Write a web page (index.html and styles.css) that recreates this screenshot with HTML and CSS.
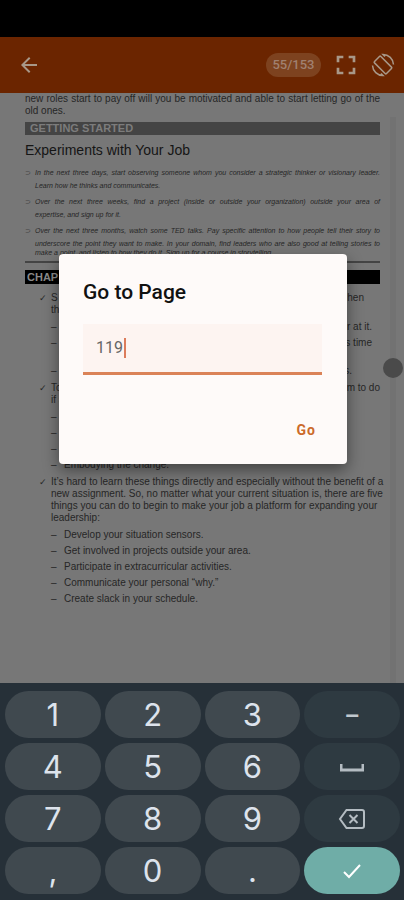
FILE: index.html
```html
<!DOCTYPE html>
<html lang="en">
<head>
<meta charset="utf-8">
<meta name="viewport" content="width=device-width, initial-scale=1">
<title>Go to Page</title>
<link rel="stylesheet" href="styles.css">
</head>
<body>
<div class="status"></div>
<header class="appbar">
  <button class="icon-btn" aria-label="Back">
    <svg width="24" height="24" viewBox="0 0 24 24"><path d="M20 11H7.800l5.600-5.600L12 4l-8 8 8 8 1.400-1.400L7.800 13H20z"/></svg>
  </button>
  <span class="counter">55/153</span>
  <button class="icon-btn" aria-label="Full screen">
    <svg width="32" height="32" viewBox="0 0 24 24"><path d="M7 14H5v5h5v-2H7zM5 10h2V7h3V5H5zM17 17h-3v2h5v-5h-2zM14 5v2h3v3h2V5z"/></svg>
  </button>
  <button class="icon-btn" aria-label="Rotate screen">
    <svg width="24" height="24" viewBox="0 0 24 24"><g class="rotate"><rect x="7.500" y="3.500" width="9" height="17" rx="1" transform="rotate(-45 12 12)" /><path d="M1.500 12.500A10.500 10.500 0 0 0 12 22.500l-2-2M22.500 11.500A10.500 10.500 0 0 0 12 1.500l2 2" /></g></svg>
  </button>
</header>
<main class="viewer">
  <article class="page">
    <p class="body"><span class="full">new roles start to pay off will you be motivated and able to start letting go of the</span><span>old ones.</span></p>
    <h2 class="band">GETTING STARTED</h2>
    <h3 class="heading">Experiments with Your Job</h3>
    <ul class="tips">
      <li><span class="full">In the next three days, start observing someone whom you consider a strategic thinker or visionary leader.</span><span>Learn how he thinks and communicates.</span></li>
      <li><span class="full">Over the next three weeks, find a project (inside or outside your organization) outside your area of</span><span>expertise, and sign up for it.</span></li>
      <li><span class="full">Over the next three months, watch some TED talks. Pay specific attention to how people tell their story to</span><span class="full">underscore the point they want to make. In your domain, find leaders who are also good at telling stories to</span><span class="tight">make a point, and listen to how they do it. Sign up for a course in storytelling.</span></li>
    </ul>
    <hr class="rule">
    <h2 class="band chapter">CHAP</h2>
    <ul class="points">
      <li class="check"><span class="ends"><span>S</span><span class="in2">hen</span></span><span>the</span></li>
      <li class="dash"><span class="ends"><span></span><span class="in1">r at it.</span></span></li>
      <li class="dash two"><span class="ends"><span></span><span class="in1">s time</span></span></li>
      <li class="dash"><span class="ends"><span></span><span class="in3">s.</span></span></li>
      <li class="check"><span class="ends"><span>To</span><span>m to do</span></span><span>if s</span></li>
      <li class="dash"></li>
      <li class="dash"></li>
      <li class="dash"></li>
      <li class="dash">Embodying the change.</li>
      <li class="check"><span>It’s hard to learn these things directly and especially without the benefit of a</span><span>new assignment. So, no matter what your current situation is, there are five</span><span>things you can do to begin to make your job a platform for expanding your</span><span>leadership:</span></li>
      <li class="dash">Develop your situation sensors.</li>
      <li class="dash">Get involved in projects outside your area.</li>
      <li class="dash">Participate in extracurricular activities.</li>
      <li class="dash">Communicate your personal “why.”</li>
      <li class="dash">Create slack in your schedule.</li>
    </ul>
  </article>
  <div class="scroll"><span class="thumb"></span></div>
  <form class="dialog" role="dialog" aria-labelledby="title">
    <h1 class="title" id="title"><label for="page">Go to Page</label></h1>
    <div class="field"><input id="page" type="text" inputmode="numeric" value="119"><span class="caret"></span></div>
    <button class="go" type="button">Go</button>
  </form>
</main>
<section class="keyboard" aria-label="Keyboard">
  <button>1</button><button>2</button><button>3</button><button class="dim">–</button>
  <button>4</button><button>5</button><button>6</button>
  <button class="dim" aria-label="Space"><svg width="24" height="24" viewBox="0 0 24 24"><path class="line thick" d="M1 9v6h22V9"/></svg></button>
  <button>7</button><button>8</button><button>9</button>
  <button class="dim" aria-label="Delete"><svg width="28" height="24" viewBox="0 0 28 24"><path class="line" d="M8.500 3H24a2 2 0 0 1 2 2v14a2 2 0 0 1-2 2H8.500L2 12zM11.500 8l8 8M19.500 8l-8 8"/></svg></button>
  <button>,</button><button>0</button><button>.</button>
  <button class="done" aria-label="Done"><svg width="24" height="24" viewBox="0 0 24 24"><path class="line" d="M4 13l5 5L20 6"/></svg></button>
</section>
</body>
</html>
```
FILE: styles.css
```css
* { box-sizing: border-box; }
body {
  margin: 0;
  min-height: 100vh;
  display: flex;
  flex-direction: column;
  background: #777;
  color: #262626;
  font-family: "Liberation Sans", Arial, sans-serif;
}
button { border: 0; padding: 0; background: none; font: inherit; color: inherit; }
ul, h1, h2, h3, p { margin: 0; padding: 0; font-weight: 400; list-style: none; }
svg { display: block; }

.status { height: 37px; background: #000; }
.appbar {
  height: 56px;
  display: flex;
  align-items: center;
  background: #6b2500;
  color: #a08070;
  padding: 0 9px 0 17px;
}
.appbar svg { fill: #a89888; }
.appbar .rotate { fill: none; stroke: #a89888; stroke-width: 1.5; }
.counter {
  margin: 0 9px 0 auto;
  width: 55px;
  border-radius: 12px;
  background: #7d421f;
  text-align: center;
  font: 500 13px/24px Roboto, sans-serif;
}
.icon-btn + .icon-btn { margin-left: 9px; }

.viewer { position: relative; flex: 1; display: flex; overflow: hidden; }
.page { flex: 1; min-width: 0; padding: 0 10px 0 25px; }
.page span, .page li { white-space: nowrap; }
.page p > span, .page li > span { display: block; }
.page .full { text-align: justify; text-align-last: justify; white-space: normal; }
.body { font-size: 10px; line-height: 12px; }
.band {
  margin-top: 5px;
  padding-left: 5px;
  height: 13px;
  font-size: 11px;
  line-height: 13px;
  font-weight: 700;
  background: #444;
  color: #7c7c7c;
}
.heading { margin-top: 5px; font-size: 14px; line-height: 20px; color: #151515; }
.tips { margin-top: 6px; font-size: 7px; line-height: 13px; font-style: italic; }
.tips li { position: relative; padding-left: 10px; margin-bottom: 3px; }
.tips li::before { content: "⊃"; position: absolute; left: 0; font-style: normal; color: #444; }
.tips .tight { line-height: 6px; }
.rule { border: 0; height: 2px; margin: 5px 0 7px; background: #444; }
.chapter { margin: 0; padding-left: 2px; height: 14px; line-height: 14px; background: #000; color: #8a8a8a; }

.points { padding: 7px 0 0 26px; font-size: 10px; line-height: 12px; display: flex; flex-direction: column; }
.points li { position: relative; margin-bottom: 4px; }
.points .check { margin: 1px 0 5px; }
.check::before { content: "✓"; position: absolute; left: -12px; font-family: "DejaVu Sans", sans-serif; font-size: 9px; }
.dash { min-height: 12px; padding-left: 13px; }
.dash::before { content: "–"; position: absolute; left: 0; }
.points .two { margin-bottom: 16px; }
.points .ends { display: flex; justify-content: space-between; }
.in1 { margin-right: 8px; }
.in2 { margin-right: 16px; }
.in3 { margin-right: 28px; }

.scroll {
  width: 6px;
  margin: 24px 8px 0 0;
  display: flex;
  flex-direction: column;
  align-items: center;
  background: #727272;
}
.thumb { flex: none; width: 20px; height: 20px; margin-top: 241px; border-radius: 50%; background: #4a4a4a; }

.dialog {
  position: absolute;
  top: 161px;
  left: 59px;
  right: 57px;
  padding: 24px 25px 17px 24px;
  display: flex;
  flex-direction: column;
  border-radius: 4px;
  background: #fefaf9;
  box-shadow: 0 6px 16px rgba(0, 0, 0, .45);
  font-family: Roboto, sans-serif;
}
.title { font-size: 21px; line-height: 28px; font-weight: 500; color: #111; }
.field {
  margin-top: 18px;
  height: 51px;
  display: flex;
  align-items: center;
  padding-left: 13px;
  background: #fdf4f1;
  border-bottom: 3px solid #db8358;
}
.field input {
  width: 28px;
  padding: 0;
  border: 0;
  outline: 0;
  background: none;
  font: 400 16px/24px Roboto, sans-serif;
  color: #666;
}
.caret { width: 2px; height: 20px; background: #dc7c5c; }
.go { align-self: flex-end; margin-top: 38px; padding: 0 6px; font-size: 14px; line-height: 34px; font-weight: 700; letter-spacing: 1px; color: #cc6a2b; }

.keyboard {
  display: grid;
  grid-template-columns: repeat(4, 1fr);
  grid-auto-rows: 47px;
  gap: 5px 4px;
  padding: 8px 4px 6px 5px;
  background: #263038;
}
.keyboard button {
  display: grid;
  place-items: center;
  border-radius: 24px;
  background: #40494f;
  color: #dde3ec;
  font: 400 31px/47px Inter, sans-serif;
}
.keyboard .dim { background: #2e3a41; color: #c0c8ce; font-size: 24px; font-weight: 600; }
.keyboard .done { background: #6fada7; }
.line { fill: none; stroke: #b4bcc2; stroke-width: 2; }
.thick { stroke-width: 3; }
.done .line { stroke: #fff; }
```
